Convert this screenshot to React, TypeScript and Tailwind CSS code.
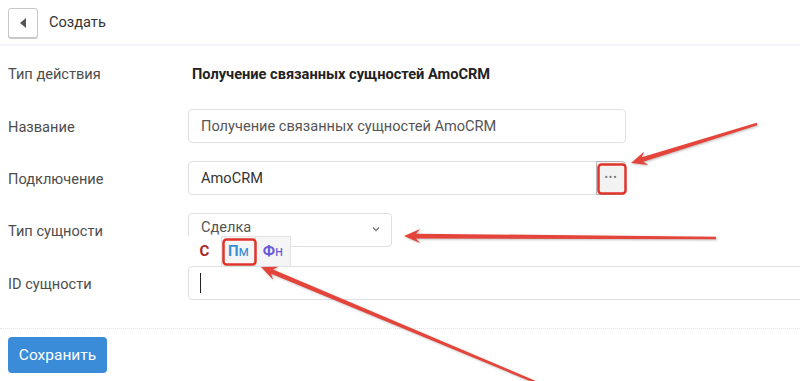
import React from "react";

type Pt = [number, number];

function Arrow({ tail, tip }: { tail: Pt; tip: Pt }) {
  const dx = tip[0] - tail[0];
  const dy = tip[1] - tail[1];
  const len = Math.hypot(dx, dy);
  const ux = dx / len;
  const uy = dy / len;
  const nx = -uy;
  const ny = ux;
  const headLen = 16;
  const headW = 7;
  const base: Pt = [tip[0] - ux * headLen, tip[1] - uy * headLen];
  const neck: Pt = [tip[0] - ux * (headLen - 4), tip[1] - uy * (headLen - 4)];
  const tw = 1.2;
  const sw = 2.4;
  const pts: Pt[] = [
    [tail[0] + nx * tw, tail[1] + ny * tw],
    [neck[0] + nx * sw, neck[1] + ny * sw],
    [base[0] + nx * headW, base[1] + ny * headW],
    tip,
    [base[0] - nx * headW, base[1] - ny * headW],
    [neck[0] - nx * sw, neck[1] - ny * sw],
    [tail[0] - nx * tw, tail[1] - ny * tw],
  ];
  return (
    <polygon
      points={pts.map((p) => `${p[0]},${p[1]}`).join(" ")}
      fill="#e5443a"
      style={{ filter: "drop-shadow(1px 1px 1px rgba(0,0,0,0.25))" }}
    />
  );
}

function Row({ label, children, className = "" }: { label: string; children: React.ReactNode; className?: string }) {
  return (
    <div className={`flex items-center h-[34px] ${className}`}>
      <div className="w-[188px] shrink-0 pl-2 pt-[3px] text-[14.6px] text-[#4d4d4d]">{label}</div>
      {children}
    </div>
  );
}

export default function App() {
  return (
    <div
      className="relative w-[800px] h-[381px] overflow-hidden bg-white"
      style={{ fontFamily: "Roboto, 'Liberation Sans', sans-serif" }}
    >
      {/* Header */}
      <div className="flex items-center h-[46px] border-b-2 border-[#f4f4fa] pl-2 pt-[1px]">
        <button className="w-[30px] h-[30px] rounded-[3px] border border-[#c8c8c8] shadow-[0_1px_0_#c8c8c8] flex items-center justify-center bg-white">
          <svg width="8" height="10" viewBox="0 0 8 10">
            <polygon points="7,0 7,10 1,5" fill="#555" />
          </svg>
        </button>
        <span className="ml-[11px] pt-[1px] text-[14.6px] text-[#333]">Создать</span>
      </div>

      {/* Form */}
      <div className="pt-[10px]">
        <Row label="Тип действия">
          <span className="pl-1 pt-[3px] text-[14.6px] font-bold text-[#222]">Получение связанных сущностей AmoCRM</span>
        </Row>

        <Row label="Название" className="mt-[19px]">
          <div className="w-[438px] h-[34px] rounded-[4px] border border-[#dcdfe4] flex items-center pl-3 pt-[1px] text-[14.6px] text-[#555]">
            Получение связанных сущностей AmoCRM
          </div>
        </Row>

        <Row label="Подключение" className="mt-[18px]">
          <div className="w-[438px] h-[34px] rounded-[4px] border border-[#dcdfe4] flex items-center">
            <span className="flex-1 pl-3 pt-[1px] text-[14.6px] text-[#333]">AmoCRM</span>
            <div className="w-[30px] h-[34px] -mr-px rounded-r-[4px] border border-[#b8b8b8] bg-[#f2f2f2] flex items-center justify-center text-[#777] text-[10px] tracking-[1px] leading-none">
              •••
            </div>
          </div>
        </Row>

        <Row label="Тип сущности" className="mt-[18px]">
          <div className="w-[204px] h-[34px] rounded-[4px] border border-[#dcdfe4] flex items-center justify-between pl-3 pr-[11px] text-[14.6px] text-[#555]">
            <span className="-mt-[4px]">Сделка</span>
            <svg width="8" height="6" viewBox="0 0 8 6" className="-mt-[2px]">
              <path d="M1 1.5 L4 4.5 L7 1.5" stroke="#777" strokeWidth="1.3" fill="none" />
            </svg>
          </div>
        </Row>

        {/* ID row with tabs */}
        <div className="relative mt-[-11px] pl-[188px]">
          <div className="flex h-[30px] items-stretch">
            <div className="w-[33px] flex items-center justify-center text-[15px] font-bold text-[#a8282a] bg-white">С</div>
            <div className="w-[35px] flex items-center justify-center border border-b-0 border-[#e2e2e2] bg-[#f5f5f5] text-[15px] font-bold text-[#3b8fd6]">
              П<span className="font-normal text-[14px]">м</span>
            </div>
            <div className="w-[35px] flex items-center justify-center border border-b-0 border-l-0 border-[#e2e2e2] bg-[#f5f5f5] text-[15px] font-bold text-[#6a5ad8]">
              Ф<span className="font-normal text-[14px]">н</span>
            </div>
          </div>
          <Row label="ID сущности" className="-ml-[188px]">
            <div className="w-[640px] shrink-0 h-[34px] rounded-[4px] border border-[#dcdfe4] flex items-center pl-[11px]">
              <div className="w-px h-[20px] bg-[#222]" />
            </div>
          </Row>
        </div>

        <div className="mt-[28px] border-t border-dotted border-[#e3e5ea]" />

        <div className="pl-2 mt-[8px]">
          <button className="h-[36px] w-[99px] rounded-[4px] bg-[#3a8bd8] text-white text-[15.5px] pt-[1px]">Сохранить</button>
        </div>
      </div>

      {/* Annotations */}
      <svg className="absolute inset-0 pointer-events-none" width="800" height="381" viewBox="0 0 800 381">
        <rect x="598.5" y="164.5" width="27" height="29" rx="3" fill="none" stroke="#e0332b" strokeWidth="2.5" />
        <rect x="223.5" y="239.5" width="32" height="25" rx="3" fill="none" stroke="#e0332b" strokeWidth="2.5" />
        <Arrow tail={[757, 124]} tip={[631, 163]} />
        <Arrow tail={[716, 238]} tip={[404, 236]} />
        <Arrow tail={[540, 384]} tip={[261, 267]} />
      </svg>
    </div>
  );
}
